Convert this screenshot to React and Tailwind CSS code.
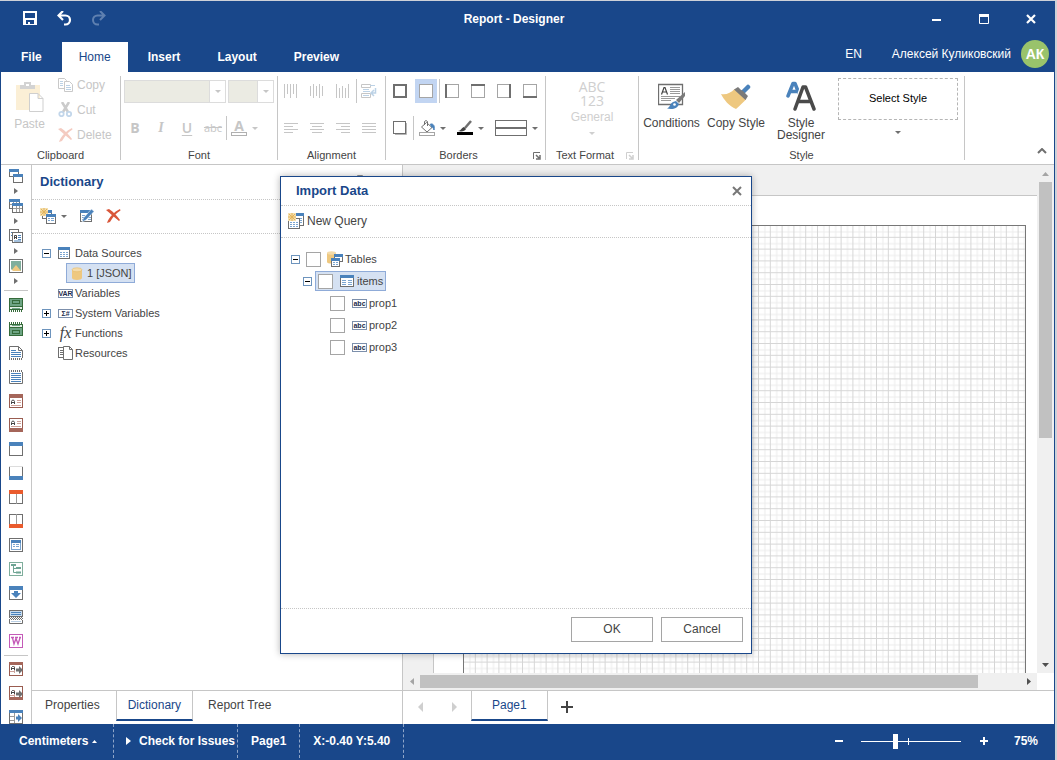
import React, { useState } from 'react';

const Svg = ({ w = 14, h = 14, className = '', children }) => (
    <svg width={w} height={h} viewBox={`0 0 ${w} ${h}`} className={`shrink-0 ${className}`} fill="none" aria-hidden="true">
        {children}
    </svg>
);

const Caret = ({ color = '#6f6f6f' }) => (
    <Svg w={6} h={3}><path d="M0 0h6L3 3z" fill={color} /></Svg>
);

const RightArrow = ({ color = '#6f6f6f' }) => (
    <Svg w={4} h={6}><path d="M0 0v6l4-3z" fill={color} /></Svg>
);

// a small window with a coloured caption, used by many icons
const MiniWindow = ({ x, y, w, h, cap = 3, color = '#4a82bb', line = '#6f6f6f' }) => (
    <>
        <rect x={x + 0.5} y={y + 0.5} width={w - 1} height={h - 1} fill="#fff" stroke={line} />
        <rect x={x} y={y} width={w} height={cap} fill={color} />
    </>
);

const Frame = ({ color = '#6f6f6f', fill = '#fff' }) => (
    <rect x=".5" y=".5" width="13" height="13" fill={fill} stroke={color} />
);

const menuTools = [
    {
        name: 'Bands',
        icon: <><MiniWindow x={0} y={0} w={10} h={8} /><MiniWindow x={4} y={5} w={10} h={9} /></>
    },
    {
        name: 'Cross Bands',
        icon: (
            <>
                <MiniWindow x={0} y={0} w={11} h={10} />
                <path d="M1 5.5h9M4.5 3v6M7.5 3v6" stroke="#9a9a9a" />
                <MiniWindow x={3} y={4} w={11} h={10} />
                <path d="M4 9.5h9M7.5 7v6M10.5 7v6" stroke="#9a9a9a" />
            </>
        )
    },
    {
        name: 'Components',
        icon: (
            <>
                <rect x=".5" y=".5" width="9" height="11" fill="#fff" stroke="#6f6f6f" />
                <path d="M2 3.5h2M2 6.5h1" stroke="#4a82bb" />
                <rect x="3.5" y="3.5" width="10" height="10" fill="#fff" stroke="#6f6f6f" />
                <path d="M5.5 10V6.5h2V10M5.5 8.5h2" stroke="#444" />
                <path d="M9 6.5h3M9 8.5h3M9 10.5h3M5 12h7" stroke="#4a82bb" />
            </>
        )
    },
    {
        name: 'Images',
        icon: (
            <>
                <Frame />
                <rect x="2" y="2" width="10" height="10" fill="#7fae9c" />
                <path d="M2 12l5-6 5 6z" fill="#eec880" />
                <path d="M4 12l-2-2v2z" fill="#fff" />
            </>
        )
    }
];

const ReportBand = ({ flip }) => (
    <g transform={flip ? 'matrix(1 0 0 -1 0 14)' : undefined}>
        <rect x=".5" y=".5" width="13" height="11" fill="#e3efe6" stroke="#356b3a" />
        <rect x="1" y="1" width="12" height="7" fill="#6ea584" />
        <rect x="3.5" y="2.5" width="7" height="3" stroke="#356b3a" />
        <path d="M0 8.5h14" stroke="#356b3a" />
        <path d="M3 10.5h8" stroke="#6ea584" />
        <path d="M0 13h14" stroke="#356b3a" strokeDasharray="1 1" strokeWidth="2" />
    </g>
);

const TextBand = ({ flip }) => (
    <>
        <Frame color="#9a5c50" />
        <rect y={flip ? 10 : 0} width="14" height="4" fill="#a5665a" />
        <g transform={flip ? 'translate(0 -3)' : undefined}>
            <path d="M2.5 10V7.500l1-1.500h1l1 1.500V10M2.5 8.5h3" stroke="#444" />
            <path d="M8 6.5h4M8 8.5h4M2 11.5h10" stroke="#cda29a" />
        </g>
    </>
);

const SplitBand = ({ flip }) => (
    <>
        <Frame />
        <path d="M7.5 0v14" stroke="#9a9a9a" />
        <rect y={flip ? 10 : 0} width="14" height="4" fill="#ea5b2d" />
    </>
);

const CrossText = ({ flip }) => (
    <>
        <rect x=".5" y=".5" width="13" height="13" fill="#fff" stroke="#9a5c50" />
        <rect y={flip ? 11 : 0} width="14" height="3" fill="#a5665a" />
        <path d="M1 9.5h5M5.5 4v7" stroke="#cda29a" />
        <path d="M2.5 8V5.500l1-1h1l1 1V8M2.5 6.5h3" stroke="#444" />
        <path d="M7 6.5h3V4l4 4-4 4V9.500H7z" fill="#6f6f6f" />
    </>
);

const tools = [
    { name: 'Report Title', icon: <ReportBand /> },
    { name: 'Report Summary', icon: <ReportBand flip /> },
    {
        name: 'Page Header',
        icon: (
            <>
                <path d="M.5 12V.5h9l4 4V12M9.5.5v4h4" fill="#fff" stroke="#6f6f6f" />
                <path d="M2 4.500h5M2 6.500h10M2 8.500h10M2 10.500h10" stroke="#4a82bb" strokeWidth="1.200" />
                <path d="M0 13h14" stroke="#6f6f6f" strokeDasharray="1 1" strokeWidth="2" />
            </>
        )
    },
    {
        name: 'Page Footer',
        icon: (
            <>
                <path d="M.5 2v11.500h13V2" stroke="#6f6f6f" />
                <path d="M0 1h14" stroke="#6f6f6f" strokeDasharray="1 1" strokeWidth="2" />
                <path d="M2 3.500h10M2 5.500h10M2 7.500h10M2 9.500h10M2 11.500h10" stroke="#4a82bb" strokeWidth="1.200" />
            </>
        )
    },
    { name: 'Group Header', icon: <TextBand /> },
    { name: 'Group Footer', icon: <TextBand flip /> },
    { name: 'Header', icon: <MiniWindow x={0} y={0} w={14} h={14} cap={4} /> },
    { name: 'Footer', icon: <><Frame /><rect width="14" height="1" fill="#ddd" /><rect y="10" width="14" height="4" fill="#4a82bb" /></> },
    { name: 'Column Header', icon: <SplitBand /> },
    { name: 'Column Footer', icon: <SplitBand flip /> },
    {
        name: 'Data',
        icon: (
            <>
                <Frame />
                <rect x="2.5" y="2.5" width="9" height="9" stroke="#7ba5d0" />
                <rect x="2" y="2" width="10" height="3" fill="#4a82bb" />
                <path d="M4 6.5h2M7 6.5h3M4 8.5h2M7 8.5h3" stroke="#7ba5d0" />
            </>
        )
    },
    {
        name: 'Hierarchical Data',
        icon: (
            <>
                <Frame color="#7fae9c" />
                <path d="M2 3h5M7 6h5M7 10.5h5" stroke="#6ea594" strokeWidth="2" />
                <path d="M4.5 4v6.500H7M4.5 6.500H7" stroke="#6ea594" />
            </>
        )
    },
    {
        name: 'Child',
        icon: <><Frame /><rect width="14" height="4" fill="#4a82bb" /><path d="M5 5h4v2h3l-5 5-5-5h3z" fill="#4a82bb" /></>
    },
    {
        name: 'Empty Data',
        icon: (
            <>
                <rect x=".5" y=".5" width="13" height="6" fill="#c9dcee" stroke="#6f6f6f" />
                <path d="M2 2.5h10M2 4.5h10" stroke="#4a82bb" />
                <path d="M0 7.5h14M0 9.5h14" stroke="#6f6f6f" strokeDasharray="1 1" />
                <path d="M1 8.5h13" stroke="#6f6f6f" strokeDasharray="1 1" />
                <path d="M.5 10v3.500h13V10" stroke="#6f6f6f" />
                <path d="M2 11.5h10" stroke="#b9cfe4" />
            </>
        )
    },
    {
        name: 'Watermark',
        icon: (
            <>
                <Frame color="#c45ab8" />
                <path d="M2 3.5h3M6 3.5h3M10 3.5h2M3.5 4l1.500 6L7 4.500 9 10l2-6" stroke="#c45ab8" strokeWidth="1.300" />
            </>
        )
    }
];

const crossTools = [
    { name: 'Cross Group Header', icon: <CrossText /> },
    { name: 'Cross Group Footer', icon: <CrossText flip /> },
    {
        name: 'Cross Header',
        icon: (
            <>
                <Frame />
                <rect width="14" height="3" fill="#4a82bb" />
                <path d="M5.5 3v10M1 6.5h4M1 10.5h4" stroke="#9a9a9a" />
                <path d="M7 6.5h2V4l4 4-4 4V9.500H7z" fill="#4a82bb" />
            </>
        )
    }
];

const Sparkle = () => (
    <>
        <rect width="8" height="8" fill="#f5dfae" />
        <path d="M4 0v8M0 4h8M1 1l6 6M7 1L1 7" stroke="#e2b45c" />
    </>
);

const DeleteIcon = ({ color = '#d9573a' }) => (
    <Svg w={15} h={14}>
        <path d="M0 1l3-1c5 3 8 7 11 11l-1 1C9 9 5 5 0 1z" fill={color} />
        <path d="M14 0l.5 1.500C10 4 7 8 4 13L1 14C3 8 8 3 14 0z" fill={color} />
    </Svg>
);

const TableIcon = () => (
    <Svg w={12} h={12}>
        <rect x=".5" y=".5" width="11" height="11" fill="#fff" stroke="#6f6f6f" />
        <rect width="12" height="3" fill="#4a82bb" />
        <path d="M2 5.5h2M5 5.5h2M8 5.5h2M2 7.5h2M5 7.5h2M8 7.5h2M2 9.5h2M5 9.5h2M8 9.5h2" stroke="#7ba5d0" />
    </Svg>
);

const DatabaseIcon = () => (
    <Svg w={12} h={13}>
        <path d="M1 3v8c0 2.500 10 2.500 10 0V3z" fill="#eec880" />
        <ellipse cx="6" cy="2.8" rx="5" ry="2" fill="#f4dba9" stroke="#e5b965" strokeWidth=".6" />
    </Svg>
);

const Badge = ({ children }) => (
    <span className="flex h-[9px] w-[15px] shrink-0 items-center justify-center border border-[#7c8fab] bg-white text-[7px] leading-none font-bold text-[#1c2c4c]">
        {children}
    </span>
);

const Expander = ({ open }) => (
    <button aria-label={open ? 'Collapse' : 'Expand'} className="h-[9px] w-[9px] shrink-0">
        <Svg w={9} h={9}>
            <rect x=".5" y=".5" width="8" height="8" fill="#fff" stroke="#6d94bd" />
            <path d={open ? 'M2 4.5h5' : 'M2 4.5h5M4.5 2v5'} stroke="#000" />
        </Svg>
    </button>
);

const ribbonTabs = ['File', 'Home', 'Insert', 'Layout', 'Preview'];

const Header = () => {
    const [tab, setTab] = useState('Home');

    return (
        <header className="bg-[#19478a] text-white">
            <div className="flex h-[35px] items-center">
                <div className="flex pl-3">
                    <button aria-label="Save" className="flex w-[34px] justify-center">
                        <Svg>
                            <path d="M0 0h14v14H0zM2 2v5h10V2zM3 9v4h2v-2h2v2h4V9z" fill="#fff" fillRule="evenodd" />
                        </Svg>
                    </button>
                    <button aria-label="Undo" className="flex w-[34px] justify-center">
                        <Svg w={15} h={15}>
                            <path d="M6 0L1.500 4.500 6 9M2 4.500h6.500a4.500 4.500 0 0 1 0 9H7" stroke="#fff" strokeWidth="2.200" />
                        </Svg>
                    </button>
                    <button aria-label="Redo" disabled className="flex w-[34px] justify-center">
                        <Svg w={15} h={15}>
                            <path d="M9 0l4.500 4.500L9 9M13 4.500H6.500a4.500 4.500 0 0 0 0 9H8" stroke="#5f80b0" strokeWidth="2" />
                        </Svg>
                    </button>
                </div>
                <h1 className="flex-1 text-center text-xs font-bold">Report - Designer</h1>
                <div className="flex">
                    <button aria-label="Minimize" className="flex w-[47px] items-center justify-center">
                        <Svg w={10} h={6}><path d="M0 4h9" stroke="#fff" strokeWidth="2" /></Svg>
                    </button>
                    <button aria-label="Maximize" className="flex w-[47px] items-center justify-center">
                        <Svg w={10} h={10}><path d="M.5 0v9.500h9V0" stroke="#fff" /><rect width="10" height="3" fill="#fff" /></Svg>
                    </button>
                    <button aria-label="Close" className="flex w-[47px] items-center justify-center">
                        <Svg w={10} h={10}><path d="M1 1l8 8M9 1L1 9" stroke="#fff" strokeWidth="2.200" /></Svg>
                    </button>
                </div>
            </div>
            <div className="flex h-9 items-end justify-between">
                <nav className="flex gap-[3px] pl-[3px]">
                    {ribbonTabs.map(name => (
                        <button
                            key={name}
                            onClick={() => setTab(name)}
                            className={`h-[30px] px-[17px] text-xs ${tab === name ? 'bg-white text-[#19478a]' : 'font-bold'}`}
                        >
                            {name}
                        </button>
                    ))}
                </nav>
                <div className="flex h-9 items-center pr-[5px] text-xs">
                    <button>EN</button>
                    <span className="ml-[30px]">Алексей Куликовский</span>
                    <span className="ml-2.5 flex h-7 w-7 items-center justify-center rounded-full bg-[#99c36b] text-sm font-bold">АК</span>
                </div>
            </div>
        </header>
    );
};

const Group = ({ title, className = '', launcher, children }) => (
    <section className="flex shrink-0">
        <div className={`flex flex-col ${className}`}>
            <div className="flex-1 pt-[7px]">{children}</div>
            <div className={`relative h-[17px] text-center text-[11px] leading-[17px] ${launcher ? 'pr-3.5' : ''}`}>
                {title}
                {launcher && (
                    <button aria-label={`${title} settings`} className="absolute right-1 bottom-1">
                        <Svg w={8} h={8}>
                            <path d="M.5 7V.5H7" stroke={launcher} />
                            <path d="M3 3l3 3M7 3v4H3" stroke={launcher} strokeWidth="1.500" />
                        </Svg>
                    </button>
                )}
            </div>
        </div>
        <div className="my-1 w-px bg-[#c6c6c6]" />
    </section>
);

const Tool = ({ label, active, disabled, children, className = '' }) => (
    <button
        aria-label={label}
        disabled={disabled}
        className={`flex h-6 items-center justify-center ${active ? 'mx-0.5 w-[22px] bg-[#c2d5f2]' : 'w-[26px]'} ${className}`}
    >
        {children}
    </button>
);

const Divider = () => <div className="-mr-px h-6 w-px bg-[#c6c6c6]" />;

const DisabledSelect = ({ label, className }) => (
    <div className={`flex h-[23px] border border-[#dcdcdc] bg-[#ebebe3] ${className}`}>
        <select aria-label={label} disabled className="min-w-0 flex-1 appearance-none" />
        <span className="flex w-4 items-center justify-center border-l border-[#dcdcdc] bg-white"><Caret color="#c6c6c6" /></span>
    </div>
);

const borderSides = [
    ['All Borders', 'M1 1h12v12H1z'],
    ['No Borders', ''],
    ['Left Border', 'M1 0v14'],
    ['Top Border', 'M0 1h14'],
    ['Right Border', 'M13 0v14'],
    ['Bottom Border', 'M0 13h14']
];

const Ribbon = () => (
    <div className="flex h-[93px] items-stretch border-b border-[#c6c6c6] bg-white text-[#444]">
        <Group title="Clipboard" className="w-[119px]">
            <div className="flex text-xs text-[#c6c6c6]">
                <button disabled className="flex w-[57px] flex-col items-center pt-[3px]">
                    <Svg w={28} h={31}>
                        <path d="M0 3h24v25H0z" fill="#fbefd6" />
                        <path d="M4 7V3h4V0h7v3h4v4z" fill="#d3d3d3" />
                        <rect x="10" y="2" width="3" height="2" fill="#fff" />
                        <path d="M13.5 11.5h8.500l5 5v13h-13.500zM22 11.5v5h5" fill="#fff" stroke="#cfcfcf" />
                    </Svg>
                    <span className="mt-[3px] leading-4">Paste</span>
                </button>
                <div className="-mt-[7px] flex flex-col">
                    <button disabled className="flex h-[25px] items-center gap-1">
                        <Svg w={15} h={14}>
                            <path d="M.5.5h6l2 2v8h-8z" fill="#fff" stroke="#c9c9c9" />
                            <path d="M2 3.5h3M2 5.5h3M2 7.5h3" stroke="#bcd2e6" />
                            <path d="M6.5 3.5h5l3 3v7h-8z" fill="#fff" stroke="#c9c9c9" />
                            <path d="M8 7.5h4M8 9.5h5M8 11.5h5" stroke="#bcd2e6" />
                        </Svg>
                        Copy
                    </button>
                    <button disabled className="flex h-[25px] items-center gap-1">
                        <Svg w={15} h={15}>
                            <path d="M4 0l6 10M11 0L5 10" stroke="#cbcbcb" strokeWidth="2.500" />
                            <circle cx="3.5" cy="12" r="2.2" stroke="#c2d6ea" strokeWidth="1.800" />
                            <circle cx="11" cy="12" r="2.2" stroke="#c2d6ea" strokeWidth="1.800" />
                        </Svg>
                        Cut
                    </button>
                    <button disabled className="flex h-[25px] items-center gap-1">
                        <DeleteIcon color="#f4cbc1" />
                        Delete
                    </button>
                </div>
            </div>
        </Group>

        <Group title="Font" className="w-[156px]">
            <div className="flex gap-0.5 px-[3px] pt-px">
                <DisabledSelect label="Font Name" className="w-[102px]" />
                <DisabledSelect label="Font Size" className="w-[46px]" />
            </div>
            <div className="mt-[13px] flex items-center pl-px font-['Open_Sans'] text-sm text-[#c6c6c6]">
                <Tool label="Bold" disabled><b>B</b></Tool>
                <Tool label="Italic" disabled><i className="font-['Liberation_Serif'] font-bold">I</i></Tool>
                <Tool label="Underline" disabled><span className="font-semibold underline underline-offset-2">U</span></Tool>
                <Tool label="Strikeout" disabled><s className="text-[11px]">abc</s></Tool>
                <Divider />
                <Tool label="Text Color" disabled>
                    <span className="flex w-4 flex-col items-center">
                        <span className="leading-3 font-bold">A</span>
                        <span className="h-1 w-4 border border-[#b0b0b0]" />
                    </span>
                </Tool>
                <Caret color="#c6c6c6" />
            </div>
        </Group>

        <Group title="Alignment" className="w-[107px]">
            <div className="flex">
                <Tool label="Align Top" disabled><Svg><path d="M.5 0v14M3.5 0v10M6.5 0v14M9.5 0v10M12.5 0v14" stroke="#c6c6c6" /></Svg></Tool>
                <Tool label="Align Middle" disabled><Svg><path d="M.5 2v10M3.5 0v14M6.5 2v10M9.5 0v14M12.5 2v10" stroke="#c6c6c6" /></Svg></Tool>
                <Tool label="Align Bottom" disabled><Svg><path d="M.5 0v14M3.5 4v10M6.5 2v12M9.5 4v10M12.5 0v14" stroke="#c6c6c6" /></Svg></Tool>
                <Divider />
                <Tool label="Word Wrap" disabled>
                    <Svg w={16} h={14}>
                        <path d="M.5.5h9v3h-9zM.5 9.5h9v4h-9z" stroke="#c6c6c6" />
                        <path d="M2 5.5h6M2 7.5h7M9 1.5h5M2 11.5h6" stroke="#bcd2e6" />
                        <path d="M14.5 4v5H11M13 6l-3 3 3 3" stroke="#bcd2e6" strokeWidth="1.500" />
                    </Svg>
                </Tool>
            </div>
            <div className="mt-[13px] flex">
                <Tool label="Align Left" disabled><Svg><path d="M0 2.5h14M0 5.5h9M0 8.5h14M0 11.5h9" stroke="#c6c6c6" /></Svg></Tool>
                <Tool label="Align Center" disabled><Svg><path d="M0 2.5h14M2 5.5h10M0 8.5h14M2 11.5h10" stroke="#c6c6c6" /></Svg></Tool>
                <Tool label="Align Right" disabled><Svg><path d="M0 2.5h14M5 5.5h9M0 8.5h14M5 11.5h9" stroke="#c6c6c6" /></Svg></Tool>
                <Tool label="Justify" disabled><Svg><path d="M0 2.5h14M0 5.5h14M0 8.5h14M0 11.5h14" stroke="#c6c6c6" /></Svg></Tool>
            </div>
        </Group>

        <Group title="Borders" className="w-[159px]" launcher="#6f6f6f">
            <div className="flex pl-px">
                {borderSides.map(([label, d], i) => (
                    <React.Fragment key={label}>
                        {i === 2 && <Divider />}
                        <Tool label={label} active={i === 1}>
                            <Svg>
                                <rect x=".5" y=".5" width="13" height="13" fill="#fff" stroke="#a5a5a5" />
                                {d && <path d={d} stroke="#6f6f6f" strokeWidth="2" />}
                            </Svg>
                        </Tool>
                    </React.Fragment>
                ))}
            </div>
            <div className="mt-[13px] flex items-center pl-px">
                <Tool label="Shadow">
                    <Svg w={14} h={15}>
                        <path d="M2 13.5h11.500V2" stroke="#b5b5b5" />
                        <rect x=".5" y=".5" width="12" height="12" fill="#fff" stroke="#6f6f6f" />
                    </Svg>
                </Tool>
                <Divider />
                <button aria-label="Fill Color" className="ml-1.5 flex items-center gap-[5px]">
                    <Svg w={16} h={16}>
                        <path d="M7.5 2.5l5.500 5-5 4.500-5.500-5z" fill="#fff" stroke="#6f6f6f" />
                        <path d="M5.5 5V1.500q1.500-2 3 0V6" stroke="#6f6f6f" />
                        <path d="M11.5 4c3-.5 4.500 2 3.500 6-1-3-2-3-2.500-3z" fill="#4a82bb" stroke="#4a82bb" />
                        <rect x=".5" y="12.5" width="15" height="3" fill="#fff" stroke="#a5a5a5" />
                    </Svg>
                    <Caret />
                </button>
                <button aria-label="Line Color" className="ml-[11px] flex items-center gap-[5px]">
                    <Svg w={16} h={16}>
                        <path d="M14 1L8 8" stroke="#6f6f6f" strokeWidth="2.500" />
                        <path d="M1 11c3 0 4-4 6-4l2 2c-1 2-4 3-8 2z" fill="#444" />
                        <rect y="12" width="16" height="3" fill="#000" />
                    </Svg>
                    <Caret />
                </button>
                <button aria-label="Line Style" className="ml-[11px] flex items-center gap-[5px]">
                    <Svg w={32} h={16}>
                        <rect x=".5" y=".5" width="31" height="15" stroke="#6f6f6f" />
                        <path d="M1 8h30" stroke="#6f6f6f" strokeWidth="2" />
                    </Svg>
                    <Caret />
                </button>
            </div>
        </Group>

        <Group title="Text Format" className="w-[92px]" launcher="#cfcfcf">
            <button disabled className="flex w-full flex-col items-center text-[#cfcfcf]">
                <span className="mt-px font-['Open_Sans'] text-sm leading-[14px]">ABC</span>
                <span className="font-['Open_Sans'] text-sm leading-[14px]">123</span>
                <span className="text-xs leading-[18px]">General</span>
                <span className="mt-1.5"><Caret color="#cfcfcf" /></span>
            </button>
        </Group>

        <Group title="Style" className="w-[325px]">
            <div className="flex text-xs leading-3">
                <button className="flex w-[65px] flex-col items-center gap-1.5">
                    <Svg w={28} h={32}>
                        <path d="M.5 5.5h24v20H.5z" fill="#fff" stroke="#6f6f6f" strokeWidth="1.300" />
                        <path d="M3.5 15.500l2.500-7h1l2.500 7M4.5 13h4" stroke="#444" strokeWidth="1.200" />
                        <path d="M12 8.5h10M12 10.5h10M12 12.5h10M12 14.5h10M3 17.5h19M3 19.5h14M3 21.5h10" stroke="#9a9a9a" />
                        <path d="M27 13v4l-6 7-3-3z" fill="#7a7a7a" />
                        <path d="M9 29.500c3-1 3-5 6-6.500l3-1 3 3c-1 4-6 6-12 4.500z" fill="#4a82bb" />
                        <circle cx="16.5" cy="25.5" r="1.3" fill="#fff" />
                    </Svg>
                    Conditions
                </button>
                <button className="flex w-16 flex-col items-center gap-1.5">
                    <Svg w={30} h={32}>
                        <path d="M27 8l-6 6" stroke="#4a82bb" strokeWidth="4.500" strokeLinecap="round" />
                        <path d="M0 15c5 1 10-1 13.500-5L25 20.500c-3 3-6 6-10 9.500C8 27 3 21 0 15z" fill="#eec880" />
                        <path d="M13 10.500l4-2.500c2 2 3 3 5 4l5 5-2.500 4z" fill="#7a7a7a" />
                    </Svg>
                    Copy Style
                </button>
                <button className="flex w-[66px] flex-col items-center gap-1.5">
                    <Svg w={30} h={32}>
                        <path d="M2 17L7 4.500h2L14 17M4.500 12.500h8" stroke="#4a82bb" strokeWidth="3.500" strokeLinecap="round" strokeLinejoin="round" />
                        <path d="M9 30l8-22h2.500L28 30" stroke="#fff" strokeWidth="6" />
                        <path d="M9 30l8-22h2.500L28 30M12 22.500h13" stroke="#4a4a4a" strokeWidth="3.500" strokeLinecap="round" strokeLinejoin="round" />
                    </Svg>
                    <span>Style<br />Designer</span>
                </button>
                <button className="ml-1 -mt-px flex flex-col items-center">
                    <span className="flex h-[42px] w-[120px] items-center justify-center border border-dashed border-[#b5b5b5] pb-0.5 text-[11px] text-black">Select Style</span>
                    <span className="mt-[11px]"><Caret /></span>
                </button>
            </div>
        </Group>

        <button aria-label="Collapse Ribbon" className="mt-auto mr-[7px] mb-2.5 ml-auto">
            <Svg w={10} h={6}><path d="M1 5l4-4 4 4" stroke="#6f6f6f" strokeWidth="2" /></Svg>
        </button>
    </div>
);

const Toolbox = () => (
    <aside className="flex w-[31px] shrink-0 flex-col items-center overflow-hidden border-r border-[#c6c6c6] bg-white pt-1">
        {menuTools.map(t => (
            <button key={t.name} aria-label={t.name} className="flex h-[30px] shrink-0 flex-col items-center gap-[5px]">
                <Svg>{t.icon}</Svg>
                <RightArrow />
            </button>
        ))}
        <div className="mt-px mb-0.5 h-px w-6 shrink-0 bg-[#c6c6c6]" />
        {tools.map(t => (
            <button key={t.name} aria-label={t.name} className="flex h-6 shrink-0 items-center">
                <Svg>{t.icon}</Svg>
            </button>
        ))}
        <div className="mt-0.5 mb-px h-px w-6 shrink-0 bg-[#c6c6c6]" />
        {crossTools.map(t => (
            <button key={t.name} aria-label={t.name} className="flex h-6 shrink-0 items-center">
                <Svg>{t.icon}</Svg>
            </button>
        ))}
    </aside>
);

const FxIcon = () => (
    <i className="w-[15px] text-center font-['Liberation_Serif'] text-base leading-4">fx</i>
);

const ResourceIcon = () => (
    <Svg w={15} h={14}>
        <rect x=".5" y="1.5" width="8" height="10" fill="#fff" stroke="#6f6f6f" />
        <path d="M2 4.5h4M2 6.5h4M2 8.5h4" stroke="#6f6f6f" />
        <path d="M5.5.5h6l3 3v10h-9zM11.5.5v3h3" fill="#fff" stroke="#6f6f6f" />
    </Svg>
);

const dictionary = [
    { name: 'Data Sources', open: true, icon: <TableIcon /> },
    { name: '1 [JSON]', child: true, icon: <DatabaseIcon /> },
    { name: 'Variables', icon: <Badge>VAR</Badge> },
    { name: 'System Variables', open: false, icon: <Badge>Σ#</Badge> },
    { name: 'Functions', open: false, icon: <FxIcon /> },
    { name: 'Resources', icon: <ResourceIcon /> }
];

const DictionaryPanel = () => (
    <section className="flex w-[371px] shrink-0 flex-col border-r border-[#c6c6c6] bg-white">
        <div className="flex h-[35px] items-center justify-between border-b border-dotted border-[#c6c6c6] pr-[38px] pl-2">
            <h2 className="text-[13px] font-bold text-[#19478a]">Dictionary</h2>
            <button aria-label="Pin">
                <Svg w={8} h={14}><path d="M2 1h4v6H2zM0 8h8M4 8v6" stroke="#6f6f6f" strokeWidth="1.500" /></Svg>
            </button>
        </div>
        <div className="flex h-[34px] items-center border-b border-dotted border-[#c6c6c6] pb-px pl-2">
            <button aria-label="New Item" className="flex items-center gap-[5px]">
                <Svg w={16} h={16}>
                    <MiniWindow x={2} y={2} w={10} h={9} />
                    <Sparkle />
                    <MiniWindow x={6} y={6} w={10} h={10} />
                    <path d="M8 10.5h2M11 10.5h3M8 12.5h2M11 12.5h3" stroke="#7ba5d0" />
                </Svg>
                <Caret />
            </button>
            <button aria-label="Edit" className="ml-[13px]">
                <Svg>
                    <MiniWindow x={0} y={1} w={12} h={12} />
                    <path d="M2 6.5h3M2 8.5h3M8 8.5h3M2 10.5h1M8 10.5h3" stroke="#7ba5d0" />
                    <path d="M11.500 0L14 2.500 6 11l-4 2 1.500-4z" fill="#4a82bb" stroke="#fff" strokeWidth=".5" />
                </Svg>
            </button>
            <button aria-label="Delete Item" className="ml-3"><DeleteIcon /></button>
        </div>
        <ul className="flex-1 pt-[9px] text-[11px]">
            {dictionary.map(item => (
                <li key={item.name} className="flex h-5 items-center pl-2.5">
                    {item.child ? (
                        <button className="ml-6 flex h-5 items-center gap-1 border border-[#8fabd8] bg-[#d5e1f2] pr-0.5 pl-1">
                            {item.icon}
                            {item.name}
                        </button>
                    ) : (
                        <>
                            <span className="flex w-[15px]">{item.open !== undefined && <Expander open={item.open} />}</span>
                            <span className="flex w-[18px] items-center pl-px">{item.icon}</span>
                            {item.name}
                        </>
                    )}
                </li>
            ))}
        </ul>
        <nav className="flex h-[34px] items-start border-t border-[#c6c6c6] pl-[13px] text-xs">
            <button className="h-[27px] pr-4">Properties</button>
            <button className="h-[30px] border-x border-b-2 border-x-[#c6c6c6] border-b-[#19478a] px-[11px] text-[#19478a]">Dictionary</button>
            <button className="h-[27px] px-[15px]">Report Tree</button>
        </nav>
    </section>
);

const Canvas = () => (
    <section className="flex min-w-0 flex-1 flex-col bg-white">
        <div className="flex min-h-0 flex-1">
            <div className="flex min-w-0 flex-1 flex-col">
                <div className="h-[31px] shrink-0 border-b border-[#c6c6c6] bg-[#f0f0f0]" />
                <div className="flex min-h-0 flex-1">
                    <div className="w-[31px] shrink-0 border-r border-[#c6c6c6] bg-[#f0f0f0]" />
                    <div className="min-w-0 flex-1 overflow-hidden pt-[29px] pr-[11px] pl-[29px]">
                        <div className="h-full border-x border-t border-[#777]">
                            <svg width="100%" height="100%" aria-hidden="true">
                                <defs>
                                    <pattern id="grid" width="11.8" height="11.8" patternUnits="userSpaceOnUse">
                                        <path d="M5.900 0v11.800M0 5.900h11.800" stroke="#ebebeb" />
                                        <path d="M11.300 0v11.800M0 11.300h11.800" stroke="#d6d6d6" />
                                    </pattern>
                                </defs>
                                <rect width="100%" height="100%" fill="url(#grid)" />
                            </svg>
                        </div>
                    </div>
                </div>
            </div>
            <div className="flex w-[17px] shrink-0 flex-col items-center bg-[#f0f0f0]">
                <span className="flex h-[17px] items-center"><Svg w={7} h={4}><path d="M0 4h7L3.500 0z" fill="#a5a5a5" /></Svg></span>
                <div className="min-h-0 flex-1"><div className="h-[54%] w-[13px] bg-[#c1c1c1]" /></div>
                <span className="flex h-[17px] items-center"><Svg w={7} h={4}><path d="M0 0h7L3.500 4z" fill="#505050" /></Svg></span>
            </div>
        </div>
        <div className="flex h-[17px] pr-[17px]">
            <div className="flex flex-1 items-center bg-[#f0f0f0]">
                <span className="flex w-[17px] justify-center"><Svg w={4} h={7}><path d="M4 0v7L0 3.500z" fill="#a5a5a5" /></Svg></span>
                <div className="flex-1"><div className="h-[13px] w-[93%] bg-[#c1c1c1]" /></div>
                <span className="flex w-[17px] justify-center"><Svg w={4} h={7}><path d="M0 0v7l4-3.500z" fill="#505050" /></Svg></span>
            </div>
        </div>
        <nav className="flex h-[34px] items-start border-t border-[#c6c6c6] text-xs">
            <button aria-label="Previous Page" className="flex h-8 w-[34px] items-center justify-center"><Svg w={5} h={10}><path d="M5 0v10L0 5z" fill="#cfcfcf" /></Svg></button>
            <button aria-label="Next Page" className="flex h-8 w-[34px] items-center justify-center"><Svg w={5} h={10}><path d="M0 0v10l5-5z" fill="#cfcfcf" /></Svg></button>
            <button className="h-[30px] border-x border-b-2 border-x-[#c6c6c6] border-b-[#19478a] px-5 text-[#19478a]">Page1</button>
            <button aria-label="Add Page" className="flex h-8 w-[38px] items-center justify-center"><Svg w={12} h={12}><path d="M6 0v12M0 6h12" stroke="#444" strokeWidth="2" /></Svg></button>
        </nav>
    </section>
);

const StatusBar = () => {
    const [zoom, setZoom] = useState(75);

    return (
        <footer className="flex h-9 shrink-0 items-stretch bg-[#19478a] pb-0.5 text-xs font-bold text-white">
            <button className="flex w-[113px] items-center gap-1 border-r border-dashed border-[#8ea5c8] pl-[18px]">
                Centimeters
                <Svg w={5} h={3}><path d="M0 3h5L2.500 0z" fill="#fff" /></Svg>
            </button>
            <button className="flex w-[124px] items-center gap-2 border-r border-dashed border-[#8ea5c8] pl-3">
                <Svg w={5} h={8}><path d="M0 0v8l5-4z" fill="#fff" /></Svg>
                <span className="whitespace-nowrap">Check for Issues</span>
            </button>
            <span className="flex items-center border-r border-dashed border-[#8ea5c8] px-[13px]">Page1</span>
            <span className="flex items-center border-r border-dashed border-[#8ea5c8] px-[13px]">X:-0.40 Y:5.40</span>
            <div className="ml-auto flex items-center pr-4">
                <button aria-label="Zoom Out" onClick={() => setZoom(Math.max(25, zoom - 5))}>
                    <Svg w={8} h={8}><path d="M0 4h8" stroke="#fff" strokeWidth="2" /></Svg>
                </button>
                <div className="relative ml-[18px] flex items-center">
                    <span className="absolute left-[47px] h-[7px] w-px bg-white" />
                    <input
                        type="range"
                        aria-label="Zoom"
                        min="10"
                        max="200"
                        value={zoom}
                        onChange={e => setZoom(Number(e.target.value))}
                        className="h-[15px] w-[100px] appearance-none bg-[linear-gradient(to_bottom,transparent_7px,white_7px,white_8px,transparent_8px)] [&::-webkit-slider-thumb]:h-[15px] [&::-webkit-slider-thumb]:w-[5px] [&::-webkit-slider-thumb]:appearance-none [&::-webkit-slider-thumb]:bg-white"
                    />
                </div>
                <button aria-label="Zoom In" onClick={() => setZoom(Math.min(200, zoom + 5))} className="ml-[19px]">
                    <Svg w={8} h={8}><path d="M0 4h8M4 0v8" stroke="#fff" strokeWidth="2" /></Svg>
                </button>
                <span className="ml-[26px]">{zoom}%</span>
            </div>
        </footer>
    );
};

const Check = ({ id }) => (
    <input id={id} type="checkbox" className="h-[15px] w-[15px] shrink-0 appearance-none border border-[#a5a5a5] bg-white checked:bg-[#19478a]" />
);

const ImportDialog = () => (
    <div role="dialog" aria-labelledby="import-title" className="absolute top-[176px] left-[280px] flex h-[478px] w-[472px] flex-col border border-[#19478a] bg-white text-[#444] shadow-[0_0_7px_rgba(0,0,0,0.3)]">
        <div className="flex h-[29px] items-center justify-between border-b border-dotted border-[#c6c6c6] pr-[9px] pb-px pl-[15px]">
            <h2 id="import-title" className="text-[13px] font-bold text-[#19478a]">Import Data</h2>
            <button aria-label="Close Dialog"><Svg w={10} h={10}><path d="M1 1l8 8M9 1L1 9" stroke="#777" strokeWidth="2" /></Svg></button>
        </div>
        <div className="flex h-8 shrink-0 items-center border-b border-dotted border-[#c6c6c6] pb-px pl-[7px]">
            <button className="flex items-center gap-[3px] text-xs">
                <Svg w={16} h={16}>
                    <MiniWindow x={6} y={0} w={10} h={13} />
                    <path d="M12 5.5h2M12 7.5h2M12 9.5h2" stroke="#7ba5d0" />
                    <rect x=".5" y="5.5" width="11" height="10" fill="#fff" stroke="#6f6f6f" />
                    <path d="M2 9.5h2M5 9.5h2M8 9.5h2M2 11.5h2M5 11.5h2M8 11.5h2M2 13.5h2M5 13.5h2M8 13.5h2" stroke="#7ba5d0" />
                    <Sparkle />
                </Svg>
                New Query
            </button>
        </div>
        <ul className="flex-1 pt-2.5 text-[11px]">
            <li className="flex h-[22px] items-center pl-2.5">
                <Expander open />
                <span className="ml-1.5 flex"><Check id="tables" /></span>
                <label htmlFor="tables" className="ml-1.5 flex items-center gap-0.5">
                    <Svg w={16} h={16}>
                        <path d="M0 2v9c0 2 9 2 9 0V2z" fill="#eec880" />
                        <ellipse cx="4.5" cy="2" rx="4.5" ry="1.7" fill="#f4dba9" />
                        <MiniWindow x={7} y={3} w={9} h={8} />
                        <MiniWindow x={4} y={7} w={9} h={9} />
                        <path d="M6 11.5h2M9 11.5h2M6 13.5h2M9 13.5h2" stroke="#7ba5d0" />
                    </Svg>
                    Tables
                </label>
            </li>
            <li className="flex h-[22px] items-center pl-[22px]">
                <Expander open />
                <span className="ml-[3px] flex h-5 items-center border border-[#8fabd8] bg-[#d5e1f2] px-0.5">
                    <Check id="items" />
                    <label htmlFor="items" className="ml-[7px] flex items-center gap-[3px]">
                        <Svg w={14} h={12}>
                            <rect x=".5" y=".5" width="13" height="11" fill="#fff" stroke="#6f6f6f" />
                            <rect width="14" height="3" fill="#4a82bb" />
                            <path d="M2 5.5h4M8 5.5h4M2 7.5h4M8 7.5h4M2 9.5h4M8 9.5h4" stroke="#7ba5d0" />
                        </Svg>
                        items
                    </label>
                </span>
            </li>
            {['prop1', 'prop2', 'prop3'].map(name => (
                <li key={name} className="flex h-[22px] items-center pl-[49px]">
                    <Check id={name} />
                    <label htmlFor={name} className="ml-[7px] flex items-center gap-0.5">
                        <Badge>abc</Badge>
                        {name}
                    </label>
                </li>
            ))}
        </ul>
        <div className="flex h-[45px] shrink-0 justify-end gap-2 border-t border-dotted border-[#c6c6c6] px-2 pt-2 text-xs">
            <button className="h-[25px] w-[82px] border border-[#a5a5a5] pb-0.5">OK</button>
            <button className="h-[25px] w-[82px] border border-[#a5a5a5] pb-0.5">Cancel</button>
        </div>
    </div>
);

const App = () => {
    return (
        <div className="relative h-screen bg-[#cdd1d8] pt-px pr-0.5 font-['Liberation_Sans',Arial,sans-serif] text-[#444]">
            <div className="flex h-full flex-col overflow-hidden border-x border-[#19478a] bg-white">
                <Header />
                <Ribbon />
                <main className="flex min-h-0 flex-1">
                    <Toolbox />
                    <DictionaryPanel />
                    <Canvas />
                </main>
                <StatusBar />
            </div>
            <ImportDialog />
        </div>
    );
};

export default App;
